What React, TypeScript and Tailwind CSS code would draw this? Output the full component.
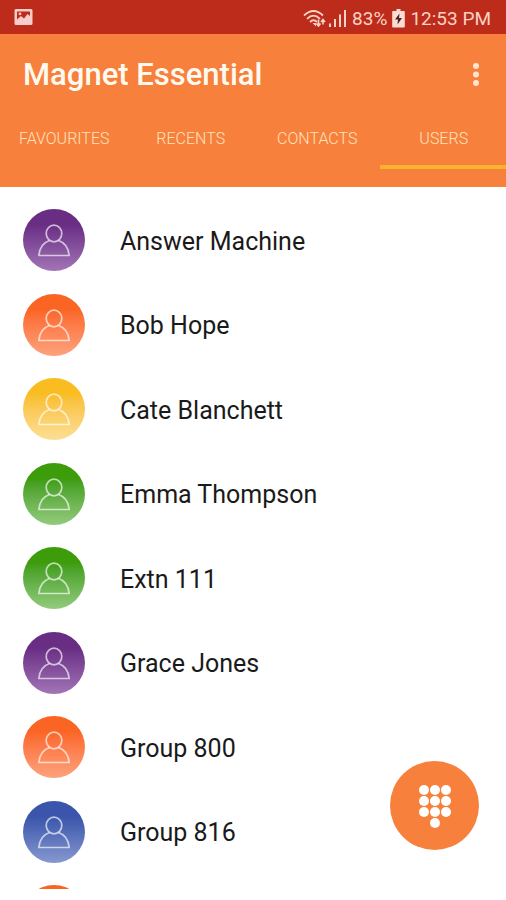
type User = { name: string; tone: string };

const PURPLE = 'bg-linear-to-b from-[#692d84] from-25% to-[#a274b6]';
const ORANGE = 'bg-linear-to-b from-[#fb6524] from-25% to-[#fda27c]';
const YELLOW = 'bg-linear-to-b from-[#f9bd22] from-25% to-[#fcdf94]';
const GREEN = 'bg-linear-to-b from-[#3d9c0a] from-25% to-[#93cb7c]';
const BLUE = 'bg-linear-to-b from-[#3a55ab] from-25% to-[#8798cf]';

const users: User[] = [
  { name: 'Answer Machine', tone: PURPLE },
  { name: 'Bob Hope', tone: ORANGE },
  { name: 'Cate Blanchett', tone: YELLOW },
  { name: 'Emma Thompson', tone: GREEN },
  { name: 'Extn 111', tone: GREEN },
  { name: 'Grace Jones', tone: PURPLE },
  { name: 'Group 800', tone: ORANGE },
  { name: 'Group 816', tone: BLUE },
];

const tabs = ['FAVOURITES', 'RECENTS', 'CONTACTS', 'USERS'];

const keypadDots = [
  [8, 8], [19, 8], [30, 8],
  [8, 19], [19, 19], [30, 19],
  [8, 30], [19, 30], [30, 30],
  [19, 41],
];

function Avatar({ tone }: { tone: string }) {
  return (
    <span className={`flex size-[62px] shrink-0 items-center justify-center rounded-full pt-[2px] ${tone}`}>
      <svg width="34" height="36" viewBox="0 0 34 36" fill="none" stroke="#fff" strokeOpacity="0.66" strokeWidth="1.700" strokeLinejoin="round" aria-hidden="true">
        <ellipse cx="17" cy="10.500" rx="7.800" ry="8.300" />
        <path d="M12.500 17.500C6.500 19.500 2.500 24.500 1.800 32.500H32.200C31.500 24.500 27.500 19.500 21.500 17.500" />
      </svg>
    </span>
  );
}

function StatusBar() {
  return (
    <div className="flex h-[34px] shrink-0 items-center justify-between bg-[#bd2c1a] pr-[15px] pl-[14px] text-[#fbd3c6]">
      <svg width="19" height="18" viewBox="0 0 19 18" aria-label="Picture notification">
        <path fill="#f6cdca" fillRule="evenodd" d="M2 1h15a1.500 1.500 0 0 1 1.500 1.500v13A1.500 1.500 0 0 1 17 17H2a1.500 1.500 0 0 1-1.500-1.500v-13A1.500 1.500 0 0 1 2 1zM3 3.500v8l4-3.500 3 2.500 3.500-4.500 2.500 2V3.500z" />
        <circle cx="6" cy="5.800" r="1.400" fill="#f6cdca" />
      </svg>
      <div className="flex items-center pt-[3px] text-[19px] leading-[24px]">
        <svg className="mr-[5px]" width="44" height="20" viewBox="0 0 44 20" fill="none" stroke="currentColor" aria-label="Wi-Fi and mobile signal">
          <g strokeWidth="1.800">
            <path d="M1 6.500Q10.500 -2.500 20 6.500" />
            <path d="M4 9.800Q10.500 3.500 17 9.800" />
            <path d="M7 13Q10.500 9.500 14 13" />
          </g>
          <path d="M15.500 10.500v6M13.500 14.500l2 2.500 2-2.500M20 15.500v-5M18 13l2-2.500 2 2.500" strokeWidth="1.600" />
          <path d="M9.500 14h3.500v3.500z" fill="currentColor" stroke="none" />
          <path d="M27 14.500v3.500M32 10v8M37 5.500v12.500M42 1v17" strokeWidth="2" />
        </svg>
        <span>83%</span>
        <svg className="mx-[5px]" width="13" height="19" viewBox="0 0 13 19" aria-label="Battery charging">
          <path d="M4.500 0h4v2H12a.8.8 0 0 1 .8.8v15a.8.8 0 0 1-.8.8H1a.8.8 0 0 1-.8-.8v-15A.8.8 0 0 1 1 2h3.500z" fill="#fbdcd4" />
          <path d="M7.500 4.500L3 10.500H6L5.500 15.500L10 9H7z" fill="#4a2023" />
        </svg>
        <span>12:53 PM</span>
      </div>
    </div>
  );
}

export default function App() {
  return (
    <div className="flex h-screen flex-col overflow-hidden bg-white font-[Roboto,sans-serif]">
      <StatusBar />
      <header className="flex shrink-0 flex-col bg-[#f7803c] pb-[18px]">
        <div className="flex h-[82px] items-center justify-between pr-[18px] pl-[23px]">
          <h1 className="text-[31px] leading-[36px] font-medium text-[#fffaf0]">Magnet Essential</h1>
          <button type="button" aria-label="More options" className="flex h-[36px] w-[24px] items-center justify-center">
            <svg width="8" height="26" viewBox="0 0 8 26" fill="#ffe6d3" aria-hidden="true">
              <circle cx="4" cy="4" r="3" />
              <circle cx="4" cy="12.500" r="3" />
              <circle cx="4" cy="21" r="3" />
            </svg>
          </button>
        </div>
        <div role="tablist" className="grid grid-cols-4">
          {tabs.map((tab) => (
            <button
              key={tab}
              type="button"
              role="tab"
              aria-selected={tab === 'USERS'}
              className="h-[53px] border-b-4 border-transparent pb-[4px] pl-[2px] text-[16px] leading-[20px] font-light text-[#ffe3bd] aria-selected:border-[#fcb52b]"
            >
              {tab}
            </button>
          ))}
        </div>
      </header>
      <main className="mb-[11px] min-h-0 flex-1 overflow-hidden pt-[11px]">
        <ul>
          {users.map((user) => (
            <li key={user.name} className="flex h-[84px] items-center gap-[35px] px-[23px] even:h-[85px]">
              <Avatar tone={user.tone} />
              <span className="pt-[3px] text-[25px] leading-[32px] text-[#1a1a1a]">{user.name}</span>
            </li>
          ))}
          <li className="flex h-[84px] items-center px-[23px]">
            <Avatar tone={ORANGE} />
          </li>
        </ul>
      </main>
      <button
        type="button"
        aria-label="Open keypad"
        className="fixed right-[27px] bottom-[50px] flex size-[89px] items-center justify-center rounded-full bg-[#f7803c]"
      >
        <svg width="38" height="48" viewBox="0 0 38 48" fill="#fff" aria-hidden="true">
          {keypadDots.map(([x, y]) => (
            <circle key={`${x}-${y}`} cx={x} cy={y} r="5" />
          ))}
        </svg>
      </button>
    </div>
  );
}
